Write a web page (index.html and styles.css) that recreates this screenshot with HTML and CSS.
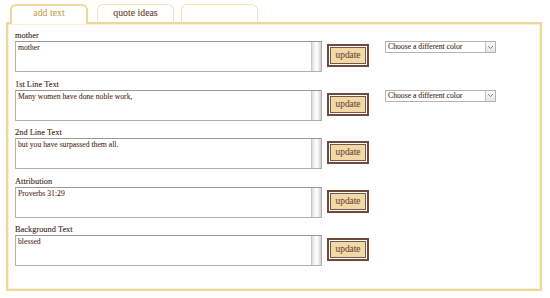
FILE: index.html
```html
<!DOCTYPE html>
<html>
<head>
<meta charset="utf-8">
<link rel="stylesheet" href="styles.css">
</head>
<body>
<div class="tabs">
  <div class="tab active">add text</div>
  <div class="tab">quote ideas</div>
  <div class="tab"></div>
</div>
<div class="panel">
  <div class="field">
    <div class="label">mother</div>
    <div class="row">
      <textarea class="ta">mother</textarea>
      <button class="btn">update</button>
      <div class="select"><span class="sel-text">Choose a different color</span><span class="sel-arrow"><svg width="7" height="5" viewBox="0 0 7 5"><path d="M1 1 L3.5 3.5 L6 1" fill="none" stroke="#888" stroke-width="1"/></svg></span></div>
    </div>
  </div>
  <div class="field">
    <div class="label">1st Line Text</div>
    <div class="row">
      <textarea class="ta">Many women have done noble work,</textarea>
      <button class="btn">update</button>
      <div class="select"><span class="sel-text">Choose a different color</span><span class="sel-arrow"><svg width="7" height="5" viewBox="0 0 7 5"><path d="M1 1 L3.5 3.5 L6 1" fill="none" stroke="#888" stroke-width="1"/></svg></span></div>
    </div>
  </div>
  <div class="field">
    <div class="label">2nd Line Text</div>
    <div class="row">
      <textarea class="ta">but you have surpassed them all.</textarea>
      <button class="btn">update</button>
    </div>
  </div>
  <div class="field">
    <div class="label">Attribution</div>
    <div class="row">
      <textarea class="ta">Proverbs 31:29</textarea>
      <button class="btn">update</button>
    </div>
  </div>
  <div class="field">
    <div class="label">Background Text</div>
    <div class="row">
      <textarea class="ta">blessed</textarea>
      <button class="btn">update</button>
    </div>
  </div>
</div>
</body>
</html>
```

FILE: styles.css
```css
html, body {
  margin: 0;
  padding: 0;
  background: #ffffff;
  font-family: "Liberation Serif", "DejaVu Serif", serif;
}

.tabs {
  display: flex;
  align-items: flex-end;
  padding: 4px 0 0 10px;
  height: 18px;
}

.tab {
  box-sizing: border-box;
  width: 77px;
  height: 18px;
  margin-right: 7px;
  border: 1px solid #f3e2b4;
  border-bottom: none;
  border-radius: 6px 6px 0 0;
  color: #5e3c2e;
  font-size: 9.8px;
  line-height: 15px;
  text-align: center;
  background: #fff;
  -webkit-text-stroke: 0.08px #5e3c2e;
}

.tab.active {
  width: 78px;
  height: 20px;
  margin-right: 9px;
  margin-bottom: -2px;
  border: 2px solid #efd79c;
  border-bottom: none;
  color: #c9a14e;
  -webkit-text-stroke: 0.08px #c9a14e;
  position: relative;
  z-index: 1;
  line-height: 14px;
}

.panel {
  box-sizing: border-box;
  margin-left: 6px;
  width: 536px;
  height: 269px;
  border: 2px solid #efd79c;
  box-shadow: inset 0 0 0 1px #faf0d6;
  padding: 7px 0 0 7px;
}

.field {
  margin-bottom: 7.5px;
}

.label {
  font-size: 8.4px;
  line-height: 10px;
  color: #442617;
  -webkit-text-stroke: 0.1px #442617;
}

.row {
  display: flex;
  align-items: flex-start;
}

.ta {
  box-sizing: border-box;
  width: 307px;
  height: 31px;
  margin: 0;
  padding: 1px 12px 1px 2px;
  border: 1px solid #b0b0b0;
  border-top-color: #989898;
  font-family: "Liberation Serif", "DejaVu Serif", serif;
  font-size: 7.7px;
  line-height: 9px;
  color: #4e2e20;
  -webkit-text-stroke: 0.08px #4e2e20;
  resize: none;
  overflow: hidden;
  background: linear-gradient(to right, #c8c8c8 0, #c8c8c8 1px, #dcdcdc 1px, #f7f7f7 40%, #ffffff 60%, #d2d2d2 100%) no-repeat right top / 10px 100%, #ffffff;
}

.btn {
  box-sizing: border-box;
  width: 42px;
  height: 23px;
  margin: 3px 0 0 5px;
  padding: 0;
  border: 2px solid #6d4a3b;
  background: #f1d9a8;
  box-shadow: inset 0 0 0 1px #ffffff, inset 0 0 0 2px #7a5646;
  font-family: "Liberation Serif", "DejaVu Serif", serif;
  font-size: 9.4px;
  color: #6b4636;
  -webkit-text-stroke: 0.08px #6b4636;
  line-height: 17px;
}

.select {
  box-sizing: border-box;
  display: flex;
  align-items: center;
  width: 111px;
  height: 12px;
  margin-left: 16px;
  border: 1px solid #b4b4b4;
  background: #fff;
}

.sel-text {
  flex: 1;
  padding-left: 2px;
  font-size: 7.7px;
  line-height: 10px;
  color: #442617;
  -webkit-text-stroke: 0.08px #442617;
  white-space: nowrap;
}

.sel-arrow {
  box-sizing: border-box;
  width: 10px;
  height: 10px;
  border-left: 1px solid #c4c4c4;
  background: linear-gradient(#fafafa, #e4e4e4);
  display: flex;
  align-items: center;
  justify-content: center;
}
```
